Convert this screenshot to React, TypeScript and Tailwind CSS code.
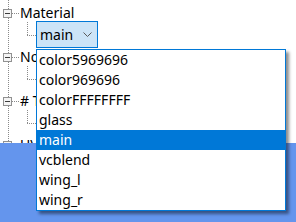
import React from "react";

const items = [
  "color5969696",
  "color969696",
  "colorFFFFFFFF",
  "glass",
  "main",
  "vcblend",
  "wing_l",
  "wing_r",
];

const Expander = () => (
  <div className="relative z-10 ml-[3px] flex h-[9px] w-[9px] shrink-0 items-center justify-center border border-[#919191] bg-[#f4f4f4]">
    <div className="h-px w-[5px] bg-[#3c3c3c]" />
  </div>
);

const TreeNode = ({ label, children }: { label: string; children?: React.ReactNode }) => (
  <div className="relative h-[44px]">
    <div className="flex h-[26px] items-center">
      <Expander />
      <div className="w-[7px] border-t border-dotted border-[#8a8a8a]" />
      <span className="pl-px leading-none">{label}</span>
    </div>
    <div className="absolute left-[27px] top-[22px] h-[13px] border-l border-dotted border-[#8a8a8a]" />
    <div className="absolute left-[27px] top-[35px] w-[9px] border-t border-dotted border-[#8a8a8a]" />
    {children}
  </div>
);

export default function App() {
  return (
    <div
      className="relative flex h-[222px] w-[296px] flex-col overflow-hidden bg-white text-[14px] text-black"
      style={{ fontFamily: '"Noto Sans", "Liberation Sans", sans-serif' }}
    >
      <div className="relative h-[143px] shrink-0 overflow-hidden">
        <div className="absolute bottom-0 left-[8px] top-0 border-l border-dotted border-[#8a8a8a]" />
        <TreeNode label="Material">
          <div className="absolute left-[36px] top-[21px] flex h-[27px] w-[62px] items-center justify-between border border-[#0078d7] bg-[#cce4f7] pl-[3px] pr-[5px]">
            <span className="leading-none">main</span>
            <svg width="9" height="6" viewBox="0 0 9 6" className="mt-px">
              <path d="M0.5 0.5 L4.5 4.5 L8.5 0.5" fill="none" stroke="#5a5a5a" strokeWidth="1" />
            </svg>
          </div>
        </TreeNode>
        <TreeNode label="Node" />
        <TreeNode label="# Texture" />
        <TreeNode label="UV" />
      </div>
      <div className="flex-1 bg-[#6495ed]" />

      <div className="absolute left-[36px] top-[49px] w-[250px] border border-[#0078d7] bg-white shadow-[3px_3px_3px_rgba(0,0,0,0.45)]">
        {items.map((it) => (
          <div
            key={it}
            className={
              "flex h-[20px] items-center pl-[2px] leading-none " +
              (it === "main" ? "bg-[#0078d7] text-white" : "")
            }
          >
            {it}
          </div>
        ))}
      </div>
    </div>
  );
}
